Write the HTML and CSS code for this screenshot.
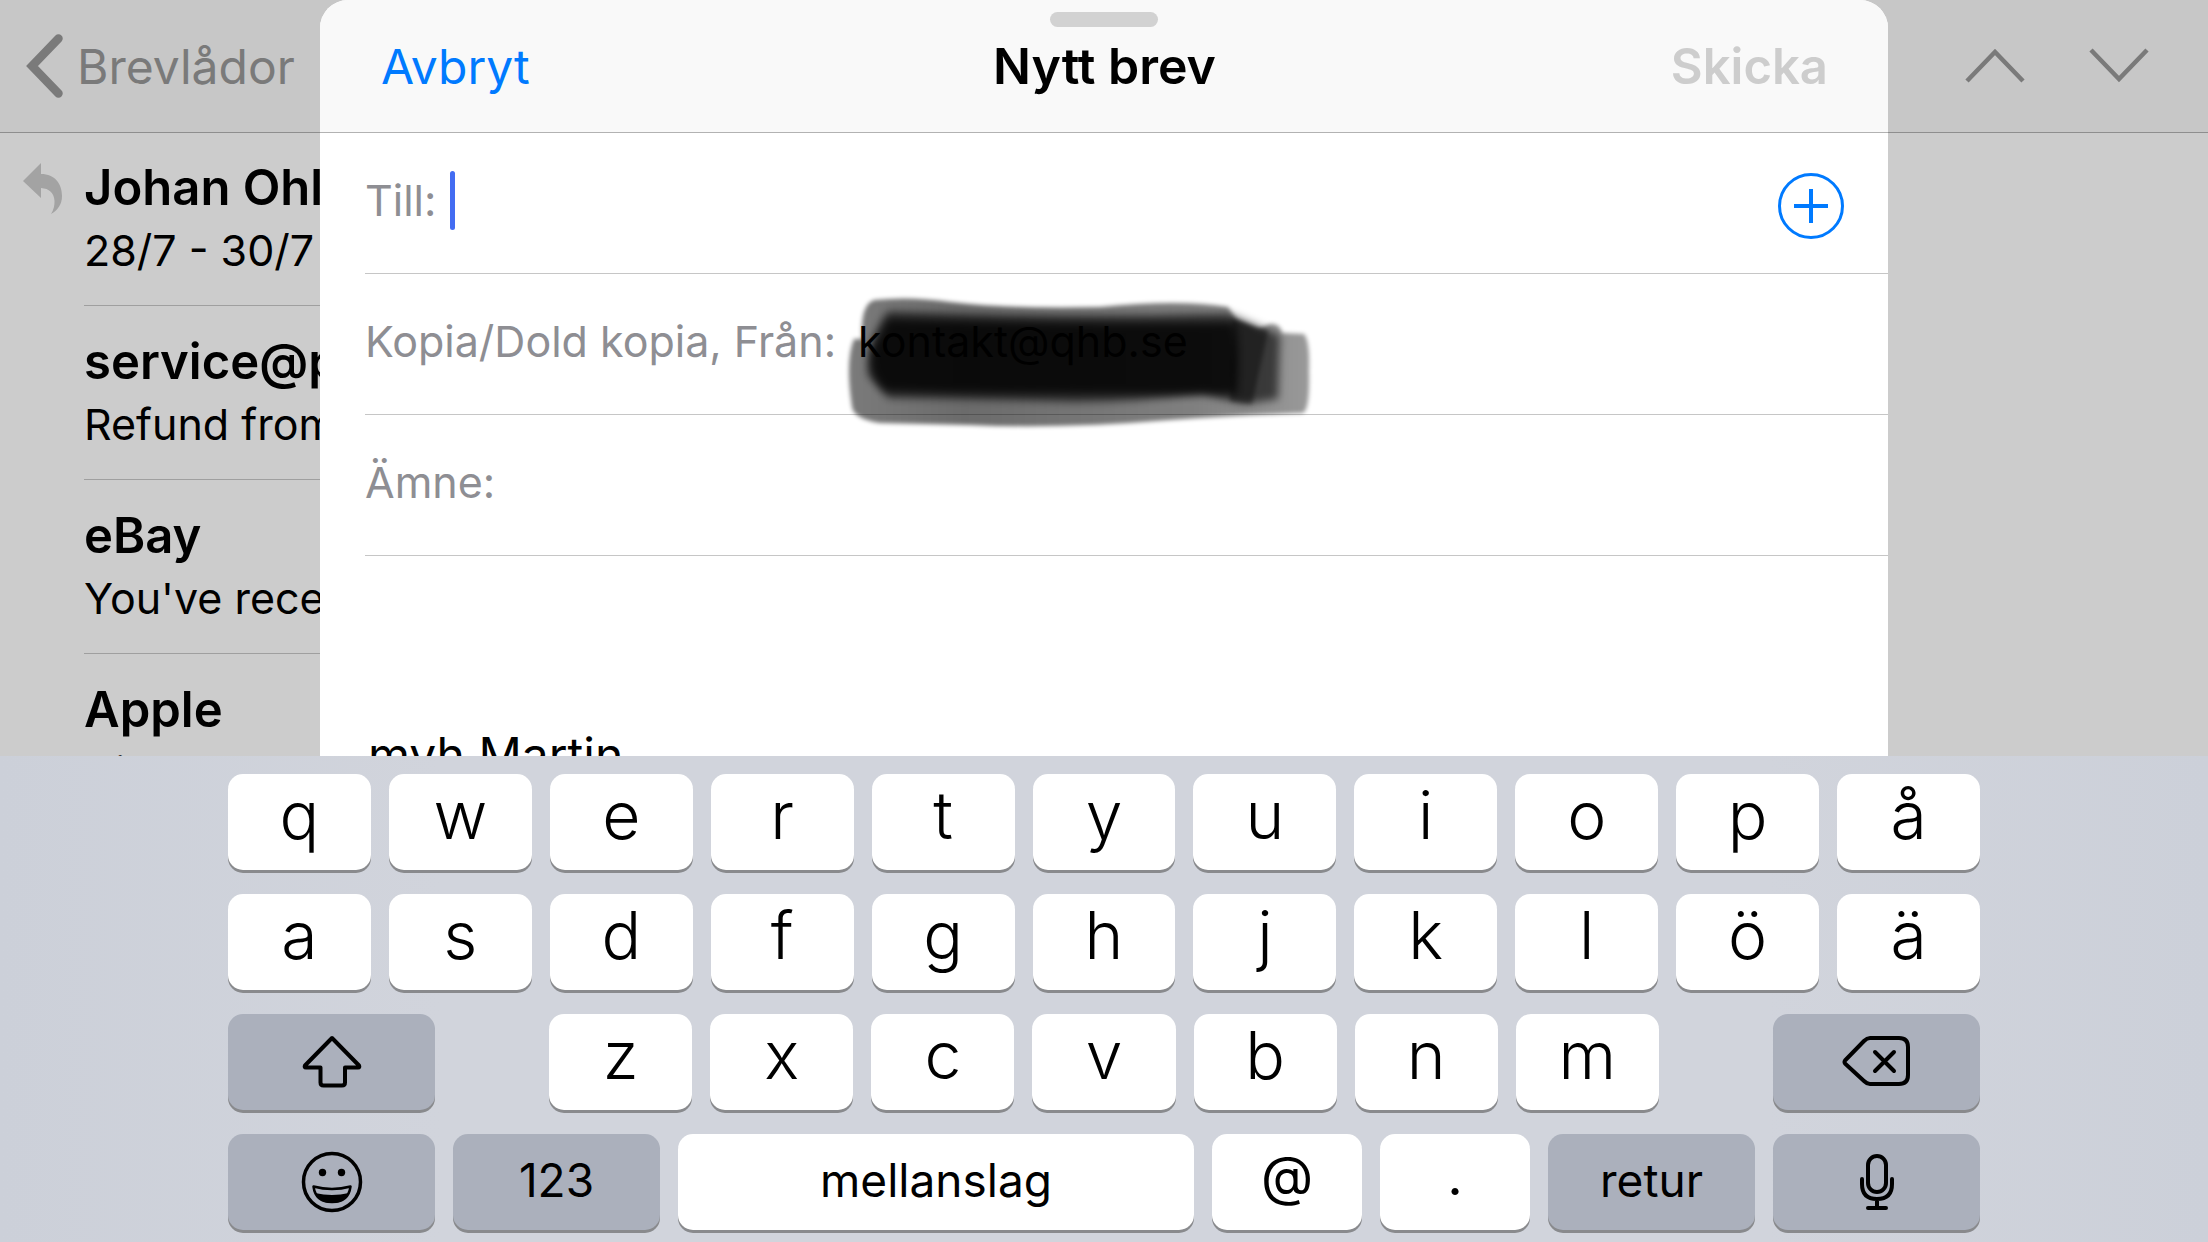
FILE: index.html
```html
<!DOCTYPE html>
<html lang="sv">
<head>
<meta charset="utf-8">
<meta name="viewport" content="width=device-width, initial-scale=1">
<title>Nytt brev</title>
<link rel="stylesheet" href="styles.css">
</head>
<body>
<div class="screen">
  <main class="stage">
    <div class="mail">
      <header class="mail-bar">
        <button class="back" type="button">
          <svg width="38" height="64" viewBox="0 0 38 64" aria-hidden="true"><path d="M33.500 4.500 7 32l26.500 27.500" fill="none" stroke="currentColor" stroke-width="8.500" stroke-linecap="round" stroke-linejoin="miter"/></svg>
          <span>Brevlådor</span>
        </button>
        <div class="pager">
          <button type="button" aria-label="Föregående"><svg width="60" height="36" viewBox="0 0 60 36"><path d="M2 33 30 4l28 29" fill="none" stroke="currentColor" stroke-width="4.500"/></svg></button>
          <button type="button" aria-label="Nästa"><svg width="60" height="36" viewBox="0 0 60 36"><path d="M2 2l28 29L58 2" fill="none" stroke="currentColor" stroke-width="4.500"/></svg></button>
        </div>
      </header>
      <ul class="inbox">
        <li><svg class="replied" width="42" height="52" viewBox="0 0 42 52" aria-hidden="true"><path d="M0 18 18 0v11c14 0 21 10 21 22 0 8-4 14-11 18 5-7 7-25-10-26v10z" fill="currentColor"/></svg><div class="message"><h2>Johan Ohl</h2><p>28/7 - 30/7</p></div></li>
        <li><div class="message"><h2>service@p</h2><p>Refund from</p></div></li>
        <li><div class="message"><h2>eBay</h2><p>You've rece</p></div></li>
        <li><div class="message"><h2>Apple</h2><p>Din varub</p></div></li>
      </ul>
    </div>
    <form class="sheet">
      <header class="sheet-bar">
        <span class="grabber"></span>
        <button class="cancel" type="button">Avbryt</button>
        <h1>Nytt brev</h1>
        <button class="send" type="button" disabled>Skicka</button>
      </header>
      <div class="field">
        <label for="to">Till:</label>
        <span class="caret"></span>
        <input id="to" type="text">
        <button class="add" type="button" aria-label="Lägg till kontakt"><svg width="66" height="66" viewBox="0 0 66 66"><g fill="none" stroke="currentColor"><circle cx="33" cy="33" r="31.500" stroke-width="3"/><path d="M33 16v34M16 33h34" stroke-width="4"/></g></svg></button>
      </div>
      <div class="field">
        <label for="from">Kopia/Dold kopia, Från:</label>
        <input id="from" type="text" value="kontakt@qhb.se">
        <svg class="scribble" width="480" height="140" viewBox="0 0 480 140" aria-hidden="true">
          <defs>
            <filter id="soft" x="-10%" y="-20%" width="120%" height="140%"><feGaussianBlur stdDeviation="2"/></filter>
            <filter id="softer" x="-10%" y="-20%" width="120%" height="140%"><feGaussianBlur stdDeviation="4"/></filter>
            <linearGradient id="wash"><stop offset="0" stop-opacity=".52"/><stop offset=".25" stop-opacity=".58"/><stop offset=".75" stop-opacity=".5"/><stop offset="1" stop-opacity=".4"/></linearGradient>
          </defs>
          <path filter="url(#soft)" fill="url(#wash)" d="M22 48Q20 14 34 9Q70 5 110 11Q170 18 260 16Q340 8 388 16L396 28L418 38L430 33Q440 32 442 42L464 43Q470 50 469 80Q470 118 463 122Q390 125 330 129Q220 138 130 134L40 132Q14 128 12 116Q5 70 14 48Z"/>
          <path filter="url(#softer)" fill="#000" fill-opacity=".6" d="M48 20Q220 28 388 22L440 44L438 108L404 113Q380 108 362 102Q290 112 230 111Q130 108 48 107L28 84Q26 50 48 20Z"/>
          <path filter="url(#soft)" fill="#000" fill-opacity=".4" d="M392 28L428 40L412 113L390 110Z"/>
          <path filter="url(#softer)" fill="#000" fill-opacity=".76" d="M48 28Q220 34 394 31Q400 60 396 103Q220 104 46 100Q26 84 32 58Z"/>
        </svg>
      </div>
      <div class="field">
        <label for="subject">Ämne:</label>
        <input id="subject" type="text">
      </div>
      <div class="body-text" role="textbox" aria-label="Brevtext">mvh Martin</div>
    </form>
  </main>
  <section class="keyboard" aria-label="Tangentbord">
    <div class="keys">
      <button type="button">q</button><button type="button">w</button><button type="button">e</button><button type="button">r</button><button type="button">t</button><button type="button">y</button><button type="button">u</button><button type="button">i</button><button type="button">o</button><button type="button">p</button><button type="button">å</button>
    </div>
    <div class="keys">
      <button type="button">a</button><button type="button">s</button><button type="button">d</button><button type="button">f</button><button type="button">g</button><button type="button">h</button><button type="button">j</button><button type="button">k</button><button type="button">l</button><button type="button">ö</button><button type="button">ä</button>
    </div>
    <div class="keys third">
      <button class="dark" type="button" aria-label="Skift"><svg width="60" height="54" viewBox="0 0 60 54"><path d="M30 3 3 30.500q-1 2 1 2h14.500v15q0 3 3 3h18.500q3 0 3-3v-15H56q2 0 1-2z" fill="none" stroke="currentColor" stroke-width="4" stroke-linejoin="round"/></svg></button>
      <div class="keys letters">
        <button type="button">z</button><button type="button">x</button><button type="button">c</button><button type="button">v</button><button type="button">b</button><button type="button">n</button><button type="button">m</button>
      </div>
      <button class="dark" type="button" aria-label="Radera"><svg width="70" height="52" viewBox="0 0 70 52"><g fill="none" stroke="currentColor" stroke-width="4" stroke-linecap="round" stroke-linejoin="round"><path d="M3 24.500 22 5q3-3 6-3h29q9 0 9 9v28q0 9-9 9H28q-3 0-6-3L3 27.500q-1-1.500 0-3z"/><path d="m33 16 19 19m0-19L33 35"/></g></svg></button>
    </div>
    <div class="keys">
      <button class="dark" type="button" aria-label="Emoji"><svg width="62" height="62" viewBox="0 0 62 62"><circle cx="31" cy="31" r="28.500" fill="none" stroke="currentColor" stroke-width="3.500"/><circle cx="21.500" cy="21.500" r="3.700"/><circle cx="40.500" cy="21.500" r="3.700"/><path d="M12.500 35.500q18.500 5 37 0-2 15.500-18.500 15.500t-18.500-15.500z" fill="none" stroke="currentColor" stroke-width="2.500" stroke-linejoin="round"/><path d="M14 42q17 4 34 0-4 10-17 10T14 42z"/></svg></button>
      <button class="dark word" type="button">123</button>
      <button class="word space" type="button">mellanslag</button>
      <button class="at" type="button">@</button>
      <button class="at" type="button">.</button>
      <button class="dark word" type="button">retur</button>
      <button class="dark" type="button" aria-label="Diktera"><svg width="36" height="58" viewBox="0 0 36 58"><g fill="none" stroke="currentColor" stroke-width="4" stroke-linecap="round"><rect x="9" y="3" width="18" height="36" rx="9"/><path d="M3 26v5q0 15 15 15t15-15v-5M18 46v9M9 55h18"/></g></svg></button>
    </div>
  </section>
</div>
</body>
</html>
```
FILE: styles.css
```css
* { box-sizing: border-box; }

body {
  margin: 0;
  background: #ccc;
  color: #000;
  font-family: Inter, "Liberation Sans", sans-serif;
}

button, input {
  margin: 0;
  padding: 0;
  border: 0;
  background: none;
  color: inherit;
  font: inherit;
}

h1, h2, p, ul { margin: 0; padding: 0; }
svg { display: block; flex: none; }

.screen {
  display: flex;
  flex-direction: column;
  height: 100vh;
  overflow: hidden;
}

/* The inbox and the sheet share one grid cell, the sheet on top. */
.stage {
  display: grid;
  grid-template-columns: minmax(0, 1fr);
  flex: 1;
  min-height: 0;
  overflow: hidden;
}
.mail, .sheet { grid-area: 1 / 1; }

.mail-bar {
  display: flex;
  align-items: center;
  justify-content: space-between;
  height: 133px;
  padding: 0 59px 0 25px;
  border-bottom: 1px solid #8e8e8e;
  background: #c7c7c7;
  color: #7a7a7a;
  font-size: 48px;
}
.back { display: flex; align-items: center; gap: 14px; }
.pager { display: flex; gap: 64px; }

.inbox {
  width: 320px;
  list-style: none;
}
.inbox li {
  position: relative;
  padding-left: 84px;
}
.message {
  height: 174px;
  padding-top: 25px;
  border-bottom: 1px solid #9f9f9f;
  white-space: nowrap;
  overflow: hidden;
}
.inbox li:first-child .message { height: 173px; padding-top: 24px; }
.message h2 {
  font-size: 49px;
  font-weight: 600;
  line-height: 62px;
}
.message p { font-size: 43px; line-height: 62px; }
.replied {
  position: absolute;
  top: 30px;
  left: 23px;
  color: #a3a3a3;
}

.sheet {
  z-index: 1;
  margin: 0 320px;
  border-radius: 28px 28px 0 0;
  background: #fff;
  overflow: hidden;
}
.sheet-bar {
  position: relative;
  display: grid;
  grid-template-columns: 1fr auto 1fr;
  align-items: center;
  height: 133px;
  padding: 0 60px 0 61px;
  border-bottom: 1px solid #b2b2b2;
  background: #f9f9f9;
  font-size: 48px;
}
.sheet-bar h1 { font-size: 50px; font-weight: 600; }
.grabber {
  position: absolute;
  top: 12px;
  left: 50%;
  width: 108px;
  height: 15px;
  margin-left: -54px;
  border-radius: 8px;
  background: #d2d2d2;
}
.cancel { justify-self: start; color: #007aff; }
.send { justify-self: end; color: #cdcdcd; font-size: 49px; font-weight: 600; }

.field {
  position: relative;
  display: flex;
  align-items: center;
  height: 141px;
  margin-left: 45px;
  padding: 0 44px 6px 0;
  border-bottom: 1px solid #c6c6c6;
  font-size: 43px;
}
.field label { color: #8e8e93; }
.field input { flex: 1; min-width: 0; outline: 0; }
#from { margin-left: 22px; }
.caret {
  width: 5px;
  height: 59px;
  margin-left: 14px;
  border-radius: 3px;
  background: #436cf2;
}
.add { padding-top: 12px; color: #007aff; }
.scribble {
  position: absolute;
  top: 17px;
  left: 475px;
}
.body-text {
  padding: 170px 48px 0;
  font-size: 48px;
  line-height: 58px;
}

.keyboard {
  display: flex;
  flex-direction: column;
  gap: 24px;
  padding: 18px 228px 12px;
  background: linear-gradient(90deg, #ccd0d9, #d1d4dc 20%, #d1d4dc 80%, #ccd0d9);
}
.keys { display: flex; gap: 18px; }
.keys button {
  display: flex;
  flex: 1 1 0;
  align-items: center;
  justify-content: center;
  height: 96px;
  padding-bottom: 14px;
  border-radius: 15px;
  background: #fff;
  box-shadow: 0 3px 0 #898a8d;
  font-size: 66px;
  font-weight: 350;
}
.keys .dark {
  flex: 0 0 207px;
  padding: 0;
  background: #abb0bc;
}
.keys.third { gap: 114px; }
.keys.letters { flex: 1; }
.keys .word { padding: 0 0 4px; font-size: 46px; font-weight: 400; }
.keys .space { flex: 1; }
.keys .at { flex: 0 0 150px; font-size: 54px; font-weight: 400; }
```
